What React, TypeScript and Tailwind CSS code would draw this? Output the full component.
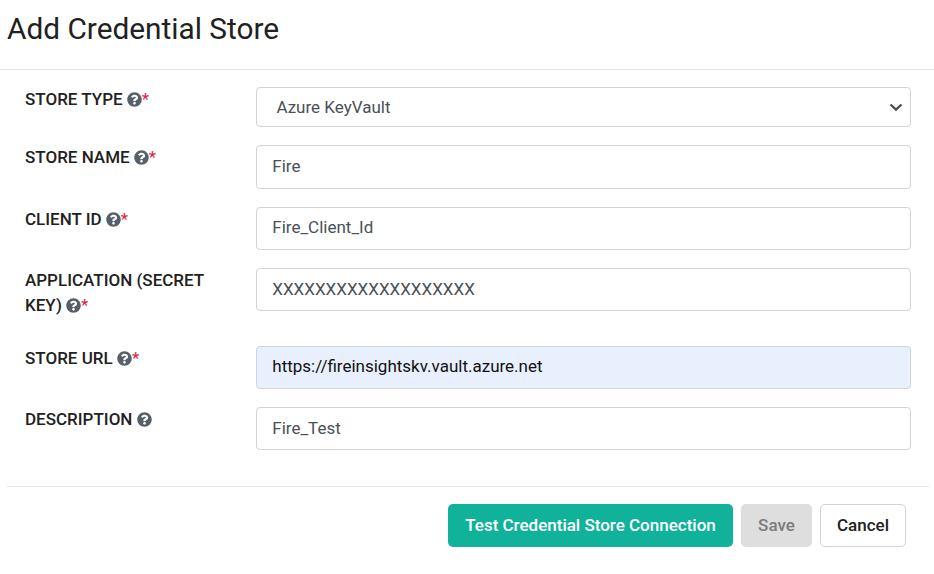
import { FaQuestionCircle } from "react-icons/fa";

type FieldProps = { label: string; value: string; required?: boolean; box: string; text?: string; mb: string };

function Label({ text, required }: { text: string; required?: boolean }) {
  return (
    <label className="w-[256px] shrink-0 pl-[25px] pr-[40px] text-[17px] font-medium leading-[25px] text-[#212121]">
      {text} <FaQuestionCircle className="inline size-[15px] align-[-2px] text-[#57606a]" />
      {required && <span className="font-normal text-[#e0243f]">*</span>}
    </label>
  );
}

function Field({ label, value, required, box, text, mb }: FieldProps) {
  return (
    <div className={"flex items-start " + mb}>
      <Label text={label} required={required} />
      <input
        readOnly
        value={value}
        className={"w-[655px] rounded-[4px] border border-[#ced4da] px-[15.3px] text-[17px] outline-none " + box + " " + (text ?? "bg-white text-[#495057]")}
      />
    </div>
  );
}

export default function App() {
  return (
    <div className="h-[574px] w-[934px] overflow-hidden bg-white font-[Roboto,sans-serif] text-[#212121]">
      <header className="h-[70px] border-b border-[#e5e7eb] pl-[7px] pt-[10px]">
        <h1 className="text-[29.8px] leading-[38px]">Add Credential Store</h1>
      </header>
      <form className="h-[416px] pt-[17px]">
        <div className="mb-[18px] flex h-[40px] items-start">
          <Label text="STORE TYPE" required />
          <div className="flex h-[40px] w-[655px] items-center justify-between rounded-[4px] border border-[#ced4da] pl-[19.5px] pr-[7px] text-[17px] text-[#495057]">
            <span className="pt-[2px]">Azure KeyVault</span>
            <svg viewBox="0 0 14 14" className="size-[14px]" fill="none" stroke="#495057" strokeWidth="2.3">
              <path d="M1.5 4.5 7 9.7l5.5-5.2" />
            </svg>
          </div>
        </div>
        <Field label="STORE NAME" value="Fire" required box="h-[44px] pb-[2px]" mb="h-[44px] mb-[18px]" />
        <Field label="CLIENT ID" value="Fire_Client_Id" required box="h-[43px] pb-[3px]" mb="h-[43px] mb-[18px]" />
        <Field label="APPLICATION (SECRET KEY)" value="XXXXXXXXXXXXXXXXXXX" required box="h-[43px] pb-[2px]" mb="h-[50px] mb-[28px]" />
        <Field label="STORE URL" value="https://fireinsightskv.vault.azure.net" required box="h-[43px] pb-[3px]" text="bg-[#e8f0fe] text-[#111111]" mb="h-[43px] mb-[18px]" />
        <Field label="DESCRIPTION" value="Fire_Test" box="h-[43px] pb-[2px]" mb="h-[43px]" />
      </form>
      <footer className="ml-[7px] mr-[5px] flex justify-end gap-2 border-t border-[#e5e7eb] pr-[23px] pt-[17px] text-[17px] font-medium">
        <button className="h-[43px] w-[285px] rounded-[5px] bg-[#10b29a] text-white">Test Credential Store Connection</button>
        <button className="h-[43px] w-[71px] rounded-[5px] bg-[#dedede] text-[#7b7b7b]">Save</button>
        <button className="h-[43px] w-[86px] rounded-[5px] border border-[#ced4da] bg-white">Cancel</button>
      </footer>
    </div>
  );
}
